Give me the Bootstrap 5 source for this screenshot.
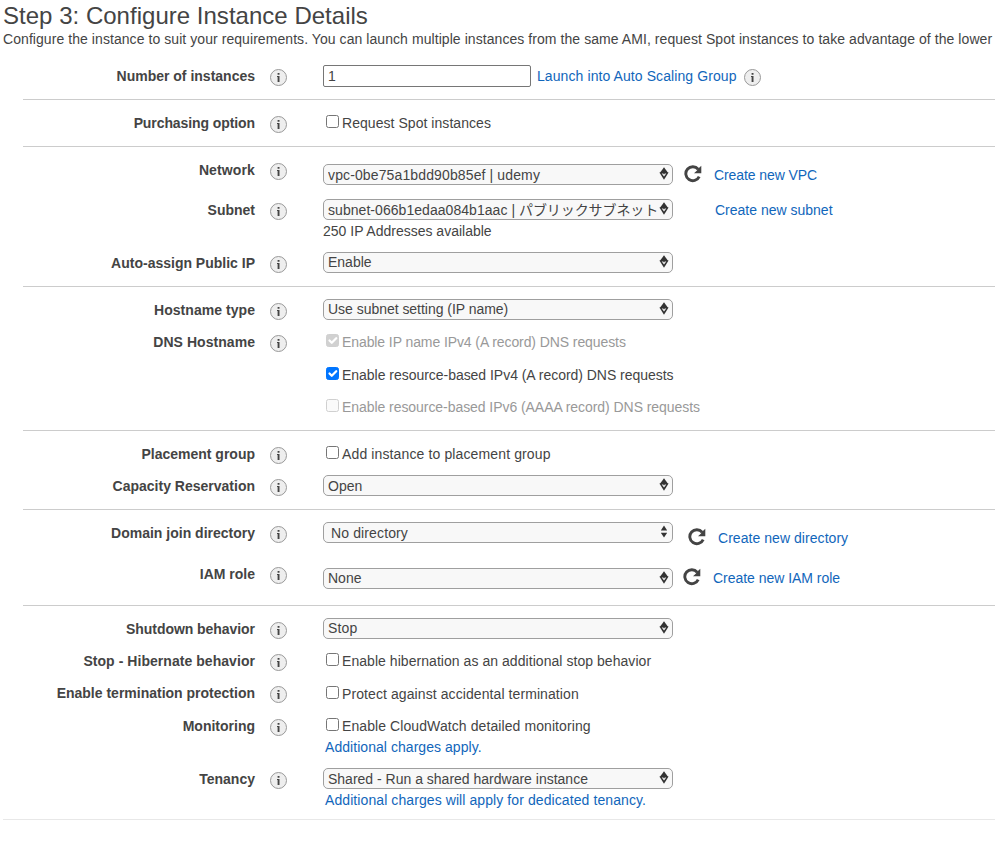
<!DOCTYPE html>
<html lang="en">
<head>
<meta charset="utf-8">
<meta name="viewport" content="width=device-width, initial-scale=1">
<title>Step 3: Configure Instance Details</title>
<link href="https://cdn.jsdelivr.net/npm/bootstrap@5.3.0/dist/css/bootstrap.min.css" rel="stylesheet">
<style>
body{font:14px/20px "Liberation Sans","Noto Sans CJK JP",Arial,sans-serif;color:#444;background:#fff;overflow:hidden}
main{padding:2px 0 0 3px;white-space:nowrap}
h1{font-size:24px;line-height:28px;font-weight:400;color:#444;letter-spacing:.02px}
.intro{line-height:18px;letter-spacing:.065px;height:27px}
a{color:#1166bb;text-decoration:none}
.groups{padding-top:9px}
section{margin-left:20px;border-bottom:1px solid #ccc;padding-top:13px}
section.first-group{padding-top:0}
section.last-group{border:0}
.field{display:flex;height:33px}
.h32{height:32px}.h40{height:40px}.h41{height:41px}.h50{height:50px}.h53{height:53px}.h98{height:98px}
.field-label{width:232px;text-align:right;font-weight:700}
.info{display:block;width:17px;height:17px;margin:3px 0 0 15px;flex:none}
.ctl{margin-left:36px}
.field .form-control,.field .pick{font-size:14px;line-height:19px;color:#444;padding:0 4px;margin-top:-1px}
.field .form-control{width:208px;height:22px;border:1px solid #767676;border-radius:2px}
.pick{width:350px;height:21px;border:1px solid #9f9f9f;border-radius:5px;background:#f8f8f8;flex:none;overflow:hidden}
.field .pick.drop{margin-top:4px}
.field .pick.inset{padding-left:7px}
.pick svg{width:10px;height:14px;flex:none;margin:2px -1px 0 0}
.pick .txt{flex:1 1 0;min-width:0;overflow:hidden;height:19px;margin-right:-1px}
.pick .low{line-height:21px}
.tight{margin-top:1px}
.check{display:flex;height:20px;margin-left:3px}
.field .form-check-input{width:13px;height:13px;margin:2px 3px 0 0;border:1px solid #767676;border-radius:2.5px;flex:none}
.field .form-check-input:checked{background-color:#0075ff;border-color:#0075ff;background-size:15px}
.field .form-check-input:disabled{border-color:#d0d0d0;opacity:1;background-color:#fafafa}
.field .form-check-input:checked:disabled{background-color:#d1d1d1}
.field .form-check-input:disabled~span{opacity:1}
.off{color:#999}
.reload{width:18px;height:18px;flex:none;display:block}
.reload-vpc{margin:5px 0 0 11px}.reload-dir{margin:5px 0 0 15px}.reload-iam{margin:4px 0 0 10px}
.s5{letter-spacing:.05px}.s8{letter-spacing:.087px}.s12{letter-spacing:.126px}.n3{letter-spacing:-.03px}.n6{letter-spacing:-.058px}.n9{letter-spacing:-.09px}
.link-asg{margin-left:6px}.info-asg{margin-left:7px}
.link-vpc{margin:5px 0 0 12px}.link-subnet{margin-left:42px}.link-dir{margin:5px 0 0 12px}.link-iam{margin:4px 0 0 12px}
.dns-2{margin-top:13px}.dns-3{margin-top:12px}
.charge{margin:1px 0 0 2px}
.foot{border-top:1px solid #e8e8e8}
</style>
<script src="https://cdn.jsdelivr.net/npm/bootstrap@5.3.0/dist/js/bootstrap.bundle.min.js"></script>
</head>
<body>
<svg class="d-none">
<symbol id="i" viewBox="0 0 17 17"><circle cx="8.5" cy="8.5" r="8" fill="#eee" stroke="#999"/><path d="M7.6 4h1.9v1.8H7.6zM7 7h2.5v5.9H7.6V8H7z" fill="#444"/></symbol>
<symbol id="diamond" viewBox="0 0 10 14"><path d="M5 .3 9.2 6H.8z" fill="#333"/><path d="M.4 5.6h9.2L5 12.8z" fill="#333"/><path d="M2.7 6.6h1.5L5 7.6l.8-1h1.5L5 9.6z" fill="#eee"/></symbol>
<symbol id="split" viewBox="0 0 10 14"><path d="M5 .6 8.2 5.4H1.8zM1.8 7.8h6.4L5 12.6z" fill="#333"/></symbol>
<symbol id="reload" viewBox="0 0 18 18"><path d="M14.2 4.2A7 7 0 1 0 15.2 11.6" fill="none" stroke="#444" stroke-width="2.9"/><path d="M17.3.8v7.4H10l3-2.6.6-1.4z" fill="#444"/></symbol>
</svg>
<main>
<h1 class="m-0">Step 3: Configure Instance Details</h1>
<p class="intro m-0">Configure the instance to suit your requirements. You can launch multiple instances from the same AMI, request Spot instances to take advantage of the lower</p>
<div class="groups">
<section class="first-group">
<div class="field"><div class="field-label">Number of instances</div><svg class="info"><use href="#i"/></svg><div class="ctl d-flex"><input class="form-control" value="1" aria-label="Number of instances"><a href="#" class="s8 link-asg">Launch into Auto Scaling Group</a><svg class="info info-asg"><use href="#i"/></svg></div></div>
</section>
<section>
<div class="field"><div class="field-label n9">Purchasing option</div><svg class="info"><use href="#i"/></svg><div class="ctl"><label class="check"><input type="checkbox" class="form-check-input"><span class="s5">Request Spot instances</span></label></div></div>
</section>
<section>
<div class="field h40"><div class="field-label s12">Network</div><svg class="info"><use href="#i"/></svg><div class="ctl d-flex align-items-start"><div class="pick drop d-flex"><span class="txt low s12">vpc-0be75a1bdd90b85ef | udemy</span><svg><use href="#diamond"/></svg></div><svg class="reload reload-vpc"><use href="#reload"/></svg><a href="#" class="link-vpc n9">Create new VPC</a></div></div>
<div class="field h53"><div class="field-label">Subnet</div><svg class="info"><use href="#i"/></svg><div class="ctl"><div class="d-flex align-items-start"><div class="pick d-flex"><span class="txt low"><span class="s5">subnet-066b1edaa084b1aac | </span><span class="n9">パブリックサブネット</span></span><svg><use href="#diamond"/></svg></div><a href="#" class="link-subnet">Create new subnet</a></div><div class="tight">250 IP Addresses available</div></div></div>
<div class="field"><div class="field-label">Auto-assign Public IP</div><svg class="info"><use href="#i"/></svg><div class="ctl"><div class="pick d-flex"><span class="txt">Enable</span><svg><use href="#diamond"/></svg></div></div></div>
</section>
<section>
<div class="field h32"><div class="field-label s5">Hostname type</div><svg class="info"><use href="#i"/></svg><div class="ctl"><div class="pick d-flex"><span class="txt n3">Use subnet setting (IP name)</span><svg><use href="#diamond"/></svg></div></div></div>
<div class="field h98"><div class="field-label s5">DNS Hostname</div><svg class="info"><use href="#i"/></svg><div class="ctl">
<label class="check off"><input type="checkbox" class="form-check-input" checked disabled><span class="n9">Enable IP name IPv4 (A record) DNS requests</span></label>
<label class="check dns-2"><input type="checkbox" class="form-check-input" checked><span class="n3">Enable resource-based IPv4 (A record) DNS requests</span></label>
<label class="check off dns-3"><input type="checkbox" class="form-check-input" disabled><span class="n6">Enable resource-based IPv6 (AAAA record) DNS requests</span></label></div></div>
</section>
<section>
<div class="field h32"><div class="field-label">Placement group</div><svg class="info"><use href="#i"/></svg><div class="ctl"><label class="check"><input type="checkbox" class="form-check-input"><span class="s12">Add instance to placement group</span></label></div></div>
<div class="field"><div class="field-label">Capacity Reservation</div><svg class="info"><use href="#i"/></svg><div class="ctl"><div class="pick d-flex"><span class="txt low">Open</span><svg><use href="#diamond"/></svg></div></div></div>
</section>
<section>
<div class="field h41"><div class="field-label">Domain join directory</div><svg class="info"><use href="#i"/></svg><div class="ctl d-flex align-items-start"><div class="pick inset d-flex"><span class="txt low s12">No directory</span><svg><use href="#split"/></svg></div><svg class="reload reload-dir"><use href="#reload"/></svg><a href="#" class="link-dir s5">Create new directory</a></div></div>
<div class="field h41"><div class="field-label">IAM role</div><svg class="info"><use href="#i"/></svg><div class="ctl d-flex align-items-start"><div class="pick drop d-flex"><span class="txt">None</span><svg><use href="#diamond"/></svg></div><svg class="reload reload-iam"><use href="#reload"/></svg><a href="#" class="link-iam n3">Create new IAM role</a></div></div>
</section>
<section class="last-group">
<div class="field h32"><div class="field-label n6">Shutdown behavior</div><svg class="info"><use href="#i"/></svg><div class="ctl"><div class="pick d-flex"><span class="txt s12">Stop</span><svg><use href="#diamond"/></svg></div></div></div>
<div class="field h32"><div class="field-label s5">Stop - Hibernate behavior</div><svg class="info"><use href="#i"/></svg><div class="ctl"><label class="check"><input type="checkbox" class="form-check-input"><span class="s5">Enable hibernation as an additional stop behavior</span></label></div></div>
<div class="field"><div class="field-label">Enable termination protection</div><svg class="info"><use href="#i"/></svg><div class="ctl"><label class="check tight"><input type="checkbox" class="form-check-input"><span class="s8">Protect against accidental termination</span></label></div></div>
<div class="field h53"><div class="field-label">Monitoring</div><svg class="info"><use href="#i"/></svg><div class="ctl"><label class="check"><input type="checkbox" class="form-check-input"><span class="s8">Enable CloudWatch detailed monitoring</span></label><div class="charge"><a href="#" class="s5">Additional charges apply.</a></div></div></div>
<div class="field h50"><div class="field-label">Tenancy</div><svg class="info"><use href="#i"/></svg><div class="ctl"><div class="pick d-flex"><span class="txt low">Shared - Run a shared hardware instance</span><svg><use href="#diamond"/></svg></div><div class="charge"><a href="#" class="s8">Additional charges will apply for dedicated tenancy.</a></div></div></div>
</section>
</div>
<div class="foot"></div>
</main>
</body>
</html>
